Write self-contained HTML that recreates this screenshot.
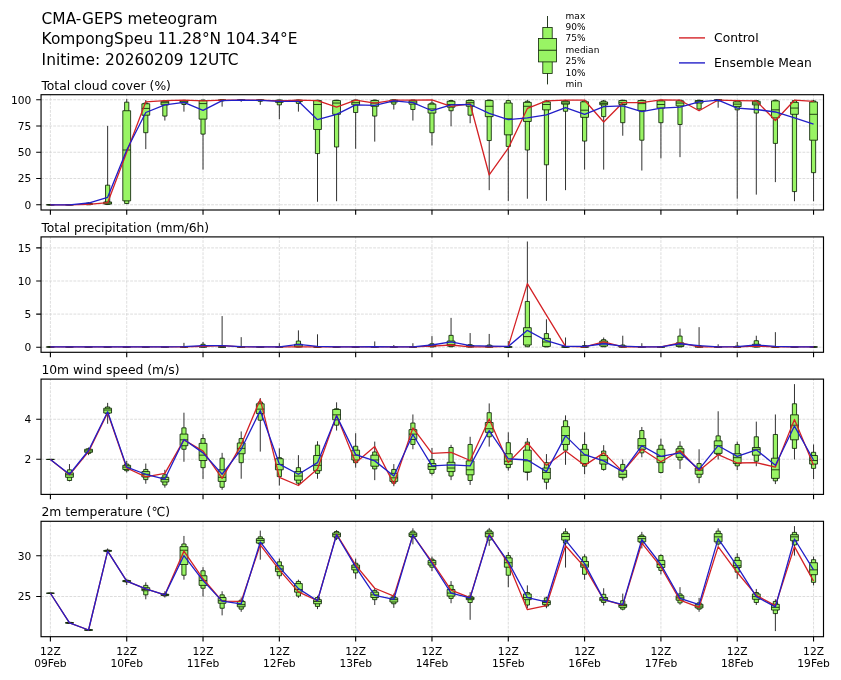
<!DOCTYPE html>
<html><head><meta charset="utf-8"><title>CMA-GEPS meteogram</title>
<style>html,body{margin:0;padding:0;background:#fff}svg{display:block;will-change:transform}</style></head>
<body>
<svg width="841" height="680" viewBox="0 0 841 680" font-family='"DejaVu Sans","Liberation Sans",sans-serif' fill="#000">
<rect width="841" height="680" fill="#fff"/>
<text x="41.6" y="23.70" font-size="15.42">CMA-GEPS meteogram</text>
<text x="41.6" y="44.45" font-size="15.42">KompongSpeu 11.28°N 104.34°E</text>
<text x="41.6" y="65.20" font-size="15.42">Initime: 20260209 12UTC</text>
<line x1="547.5" y1="16" x2="547.5" y2="84.4" stroke="#0e2408" stroke-width="0.9"/>
<rect x="542.8" y="27.5" width="9.4" height="46" fill="#99f464" stroke="#0e2408" stroke-width="0.8"/>
<rect x="538.5" y="38.4" width="18" height="23.5" fill="#99f464" stroke="#0e2408" stroke-width="0.8"/>
<line x1="538.5" y1="50.25" x2="556.5" y2="50.25" stroke="#0e2408" stroke-width="0.9"/>
<text x="565.6" y="18.55" font-size="9.0">max</text>
<text x="565.6" y="29.97" font-size="9.0">90%</text>
<text x="565.6" y="41.39" font-size="9.0">75%</text>
<text x="565.6" y="52.81" font-size="9.0">median</text>
<text x="565.6" y="64.23" font-size="9.0">25%</text>
<text x="565.6" y="75.65" font-size="9.0">10%</text>
<text x="565.6" y="87.07" font-size="9.0">min</text>
<line x1="679" y1="37.9" x2="705" y2="37.9" stroke="#d42226" stroke-width="1.39"/>
<line x1="679" y1="62.9" x2="705" y2="62.9" stroke="#221ec8" stroke-width="1.39"/>
<text x="714.1" y="42.4" font-size="12.3">Control</text>
<text x="714.0" y="67.4" font-size="12.3">Ensemble Mean</text>
<g>
<text x="41.4" y="89.8" font-size="12.33">Total cloud cover (%)</text>
<path d="M50.40 210.0V94.7M126.72 210.0V94.7M203.03 210.0V94.7M279.34 210.0V94.7M355.66 210.0V94.7M431.97 210.0V94.7M508.29 210.0V94.7M584.60 210.0V94.7M660.92 210.0V94.7M737.24 210.0V94.7M813.55 210.0V94.7M41.05 204.75H823.5M41.05 178.5H823.5M41.05 152.25H823.5M41.05 126.0H823.5M41.05 99.75H823.5" stroke="#d2d2d2" stroke-width="0.76" stroke-dasharray="2.83 1.22" fill="none"/>
<clipPath id="c0"><rect x="41.05" y="94.7" width="782.45" height="115.3"/></clipPath>
<g clip-path="url(#c0)">
<path d="M50.40 204.79V204.79M69.48 204.79V204.79M88.56 202.29V204.79M107.64 125.91V204.79M126.72 99.14V204.08M145.79 100.03V149.11M164.87 100.21V120.55M183.95 100.03V111.63M203.03 99.85V169.63M222.11 99.85V106.63M241.19 99.85V101.82M260.27 99.85V104.85M279.34 99.85V119.13M298.42 99.85V111.63M317.50 99.85V201.76M336.58 99.85V201.22M355.66 99.85V148.75M374.74 99.85V141.61M393.82 99.85V109.49M412.90 99.85V120.55M431.97 99.85V145.54M451.05 99.85V126.27M470.13 99.85V123.23M489.21 99.85V190.16M508.29 99.85V200.86M527.37 99.85V198.72M546.45 99.85V200.86M565.53 99.85V190.16M584.60 99.85V169.63M603.68 99.85V169.63M622.76 99.85V135.72M641.84 99.85V170.53M660.92 99.85V158.39M680.00 99.85V157.14M699.08 99.85V109.85M718.16 99.85V107.71M737.24 99.85V198.72M756.31 99.85V194.62M775.39 99.85V182.13M794.47 99.85V201.22M813.55 99.85V201.22" stroke="#262626" stroke-width="0.95" fill="none"/>
<path d="M48.30 204.79h4.2V204.79h-4.2ZM67.38 204.79h4.2V204.79h-4.2ZM86.46 203.01h4.2V204.79h-4.2ZM105.54 185.16h4.2V204.43h-4.2ZM124.62 102.17h4.2V203.54h-4.2ZM143.69 103.06h4.2V132.69h-4.2ZM162.77 100.92h4.2V116.09h-4.2ZM181.85 100.39h4.2V104.49h-4.2ZM200.93 100.03h4.2V134.12h-4.2ZM220.01 99.85h4.2V100.92h-4.2ZM239.09 99.85h4.2V100.39h-4.2ZM258.17 99.85h4.2V101.28h-4.2ZM277.24 100.03h4.2V104.85h-4.2ZM296.32 100.03h4.2V103.42h-4.2ZM315.40 100.21h4.2V153.57h-4.2ZM334.48 100.21h4.2V146.97h-4.2ZM353.56 100.03h4.2V112.52h-4.2ZM372.64 100.03h4.2V116.09h-4.2ZM391.72 99.85h4.2V104.14h-4.2ZM410.80 100.03h4.2V109.49h-4.2ZM429.87 103.06h4.2V132.69h-4.2ZM448.95 100.57h4.2V110.74h-4.2ZM468.03 100.03h4.2V115.20h-4.2ZM487.11 100.03h4.2V140.54h-4.2ZM506.19 100.57h4.2V146.43h-4.2ZM525.27 101.28h4.2V150.00h-4.2ZM544.35 100.92h4.2V164.81h-4.2ZM563.43 100.57h4.2V111.27h-4.2ZM582.50 100.92h4.2V141.08h-4.2ZM601.58 100.92h4.2V116.63h-4.2ZM620.66 100.21h4.2V122.70h-4.2ZM639.74 100.21h4.2V140.19h-4.2ZM658.82 100.21h4.2V122.70h-4.2ZM677.90 100.21h4.2V124.48h-4.2ZM696.98 100.21h4.2V108.95h-4.2ZM716.06 99.85h4.2V100.92h-4.2ZM735.13 100.57h4.2V109.85h-4.2ZM754.21 100.57h4.2V113.06h-4.2ZM773.29 100.21h4.2V143.40h-4.2ZM792.37 100.57h4.2V191.58h-4.2ZM811.45 100.92h4.2V172.67h-4.2Z" stroke="#0e2408" stroke-width="0.85" fill="#99f464"/>
<path d="M46.50 204.79h7.8V204.79h-7.8ZM65.58 204.79h7.8V204.79h-7.8ZM84.66 203.54h7.8V204.43h-7.8ZM103.74 201.94h7.8V204.08h-7.8ZM122.81 110.74h7.8V200.86h-7.8ZM141.89 103.78h7.8V115.20h-7.8ZM160.97 101.28h7.8V104.85h-7.8ZM180.05 100.57h7.8V102.71h-7.8ZM199.13 100.57h7.8V119.13h-7.8ZM218.21 100.03h7.8V100.39h-7.8ZM237.29 100.03h7.8V100.21h-7.8ZM256.37 100.03h7.8V100.57h-7.8ZM275.44 100.21h7.8V102.35h-7.8ZM294.52 100.21h7.8V101.64h-7.8ZM313.60 100.57h7.8V129.48h-7.8ZM332.68 100.57h7.8V114.31h-7.8ZM351.76 100.39h7.8V104.85h-7.8ZM370.84 100.57h7.8V106.28h-7.8ZM389.92 100.03h7.8V101.99h-7.8ZM409.00 100.39h7.8V104.14h-7.8ZM428.07 104.14h7.8V113.06h-7.8ZM447.15 101.28h7.8V107.17h-7.8ZM466.23 100.57h7.8V106.28h-7.8ZM485.31 100.57h7.8V116.63h-7.8ZM504.39 103.06h7.8V134.83h-7.8ZM523.47 102.35h7.8V121.45h-7.8ZM542.55 101.82h7.8V109.85h-7.8ZM561.63 101.28h7.8V104.14h-7.8ZM580.70 101.82h7.8V117.34h-7.8ZM599.78 101.99h7.8V104.85h-7.8ZM618.86 100.57h7.8V104.49h-7.8ZM637.94 100.57h7.8V110.74h-7.8ZM657.02 100.92h7.8V108.06h-7.8ZM676.10 100.92h7.8V105.92h-7.8ZM695.18 100.57h7.8V103.06h-7.8ZM714.26 100.03h7.8V100.21h-7.8ZM733.34 101.82h7.8V106.63h-7.8ZM752.41 101.28h7.8V104.85h-7.8ZM771.49 100.92h7.8V117.88h-7.8ZM790.57 102.35h7.8V114.31h-7.8ZM809.65 101.99h7.8V140.19h-7.8Z" stroke="#0e2408" stroke-width="0.85" fill="#99f464"/>
<path d="M46.50 204.79h7.8M65.58 204.79h7.8M84.66 204.08h7.8M103.74 203.01h7.8M122.81 150.00h7.8M141.89 108.42h7.8M160.97 102.71h7.8M180.05 101.28h7.8M199.13 103.60h7.8M218.21 100.21h7.8M237.29 100.03h7.8M256.37 100.03h7.8M275.44 100.92h7.8M294.52 100.57h7.8M313.60 104.49h7.8M332.68 103.06h7.8M351.76 102.71h7.8M370.84 103.06h7.8M389.92 100.92h7.8M409.00 101.99h7.8M428.07 108.95h7.8M447.15 104.49h7.8M466.23 102.71h7.8M485.31 106.28h7.8M504.39 118.77h7.8M523.47 106.28h7.8M542.55 104.49h7.8M561.63 103.06h7.8M580.70 110.20h7.8M599.78 103.60h7.8M618.86 102.71h7.8M637.94 103.60h7.8M657.02 104.49h7.8M676.10 103.06h7.8M695.18 101.28h7.8M714.26 100.03h7.8M733.34 104.14h7.8M752.41 103.06h7.8M771.49 109.85h7.8M790.57 108.06h7.8M809.65 114.31h7.8" stroke="#0e2408" stroke-width="0.85" fill="none"/>
<polyline points="50.40,204.79 69.48,204.79 88.56,204.43 107.64,202.65 126.72,152.32 145.79,101.82 164.87,100.57 183.95,100.21 203.03,100.92 222.11,100.03 241.19,100.03 260.27,100.03 279.34,100.92 298.42,100.21 317.50,100.57 336.58,107.17 355.66,100.21 374.74,103.06 393.82,100.03 412.90,100.03 431.97,99.85 451.05,106.28 470.13,103.78 489.21,174.99 508.29,148.22 527.37,108.42 546.45,100.92 565.53,100.21 584.60,100.21 603.68,121.98 622.76,102.71 641.84,102.71 660.92,99.85 680.00,100.21 699.08,110.74 718.16,100.03 737.24,100.57 756.31,100.92 775.39,120.55 794.47,100.21 813.55,101.28" stroke="#d42226" stroke-width="1.3" fill="none" stroke-linejoin="round"/>
<polyline points="50.40,204.79 69.48,204.79 88.56,203.01 107.64,197.29 126.72,150.00 145.79,112.52 164.87,104.85 183.95,102.35 203.03,110.38 222.11,100.57 241.19,100.21 260.27,100.39 279.34,101.28 298.42,101.28 317.50,119.66 336.58,114.31 355.66,104.85 374.74,105.38 393.82,100.92 412.90,102.71 431.97,110.74 451.05,104.85 470.13,104.49 489.21,113.42 508.29,119.66 527.37,117.88 546.45,114.84 565.53,107.71 584.60,114.31 603.68,106.63 622.76,105.92 641.84,111.63 660.92,108.06 680.00,107.17 699.08,101.82 718.16,100.21 737.24,108.06 756.31,109.49 775.39,111.99 794.47,117.88 813.55,124.12" stroke="#221ec8" stroke-width="1.3" fill="none" stroke-linejoin="round"/>
</g>
<rect x="41.05" y="94.7" width="782.45" height="115.3" fill="none" stroke="#000" stroke-width="1.15"/>
<path d="M50.40 210.0v4.86M126.72 210.0v4.86M203.03 210.0v4.86M279.34 210.0v4.86M355.66 210.0v4.86M431.97 210.0v4.86M508.29 210.0v4.86M584.60 210.0v4.86M660.92 210.0v4.86M737.24 210.0v4.86M813.55 210.0v4.86M41.05 204.75h-4.86M41.05 178.5h-4.86M41.05 152.25h-4.86M41.05 126.0h-4.86M41.05 99.75h-4.86" stroke="#000" stroke-width="1.11" fill="none"/>
<text x="31.35" y="208.70" font-size="10.65" text-anchor="end">0</text>
<text x="31.35" y="182.45" font-size="10.65" text-anchor="end">25</text>
<text x="31.35" y="156.20" font-size="10.65" text-anchor="end">50</text>
<text x="31.35" y="129.95" font-size="10.65" text-anchor="end">75</text>
<text x="31.35" y="103.70" font-size="10.65" text-anchor="end">100</text>
</g>
<g>
<text x="41.4" y="232.0" font-size="12.33">Total precipitation (mm/6h)</text>
<path d="M50.40 352.3V236.9M126.72 352.3V236.9M203.03 352.3V236.9M279.34 352.3V236.9M355.66 352.3V236.9M431.97 352.3V236.9M508.29 352.3V236.9M584.60 352.3V236.9M660.92 352.3V236.9M737.24 352.3V236.9M813.55 352.3V236.9M41.05 347.2H823.5M41.05 314.1H823.5M41.05 281.0H823.5M41.05 247.9H823.5" stroke="#d2d2d2" stroke-width="0.76" stroke-dasharray="2.83 1.22" fill="none"/>
<clipPath id="c1"><rect x="41.05" y="236.9" width="782.45" height="115.4"/></clipPath>
<g clip-path="url(#c1)">
<path d="M50.40 346.97V346.97M69.48 346.97V346.97M88.56 346.97V346.97M107.64 346.97V346.97M126.72 346.97V346.97M145.79 346.97V346.97M164.87 346.97V346.97M183.95 342.86V346.97M203.03 341.97V346.97M222.11 316.09V346.97M241.19 337.15V346.97M260.27 346.97V346.97M279.34 343.22V346.97M298.42 330.37V346.97M317.50 334.30V346.97M336.58 346.97V346.97M355.66 346.97V346.97M374.74 341.44V346.97M393.82 345.01V346.97M412.90 343.22V346.97M431.97 336.08V346.97M451.05 317.88V346.97M470.13 333.05V346.97M489.21 333.94V346.97M508.29 341.08V346.97M527.37 241.50V346.97M546.45 319.31V346.97M565.53 337.51V346.97M584.60 341.08V346.97M603.68 337.51V346.97M622.76 335.73V346.97M641.84 343.22V346.97M660.92 346.97V346.97M680.00 328.59V346.97M699.08 327.16V346.97M718.16 344.29V346.97M737.24 341.97V346.97M756.31 335.73V346.97M775.39 332.16V346.97M794.47 346.97V346.97M813.55 346.97V346.97" stroke="#262626" stroke-width="0.95" fill="none"/>
<path d="M48.30 346.97h4.2V346.97h-4.2ZM67.38 346.97h4.2V346.97h-4.2ZM86.46 346.97h4.2V346.97h-4.2ZM105.54 346.97h4.2V346.97h-4.2ZM124.62 346.97h4.2V346.97h-4.2ZM143.69 346.97h4.2V346.97h-4.2ZM162.77 346.97h4.2V346.97h-4.2ZM181.85 346.97h4.2V346.97h-4.2ZM200.93 344.29h4.2V346.97h-4.2ZM220.01 346.43h4.2V346.97h-4.2ZM239.09 346.97h4.2V346.97h-4.2ZM258.17 346.97h4.2V346.97h-4.2ZM277.24 346.97h4.2V346.97h-4.2ZM296.32 341.08h4.2V346.97h-4.2ZM315.40 346.97h4.2V346.97h-4.2ZM334.48 346.97h4.2V346.97h-4.2ZM353.56 346.97h4.2V346.97h-4.2ZM372.64 346.97h4.2V346.97h-4.2ZM391.72 346.97h4.2V346.97h-4.2ZM410.80 346.97h4.2V346.97h-4.2ZM429.87 343.76h4.2V346.97h-4.2ZM448.95 335.37h4.2V346.79h-4.2ZM468.03 344.65h4.2V346.97h-4.2ZM487.11 345.01h4.2V346.97h-4.2ZM506.19 346.97h4.2V346.97h-4.2ZM525.27 301.46h4.2V346.79h-4.2ZM544.35 333.58h4.2V346.97h-4.2ZM563.43 346.97h4.2V346.97h-4.2ZM582.50 345.54h4.2V346.97h-4.2ZM601.58 339.65h4.2V346.79h-4.2ZM620.66 345.01h4.2V346.97h-4.2ZM639.74 346.97h4.2V346.97h-4.2ZM658.82 346.97h4.2V346.97h-4.2ZM677.90 336.08h4.2V346.97h-4.2ZM696.98 345.54h4.2V346.97h-4.2ZM716.06 346.97h4.2V346.97h-4.2ZM735.13 346.08h4.2V346.97h-4.2ZM754.21 340.72h4.2V346.97h-4.2ZM773.29 346.97h4.2V346.97h-4.2ZM792.37 346.97h4.2V346.97h-4.2ZM811.45 346.97h4.2V346.97h-4.2Z" stroke="#0e2408" stroke-width="0.85" fill="#99f464"/>
<path d="M46.50 346.97h7.8V346.97h-7.8ZM65.58 346.97h7.8V346.97h-7.8ZM84.66 346.97h7.8V346.97h-7.8ZM103.74 346.97h7.8V346.97h-7.8ZM122.81 346.97h7.8V346.97h-7.8ZM141.89 346.97h7.8V346.97h-7.8ZM160.97 346.97h7.8V346.97h-7.8ZM180.05 346.97h7.8V346.97h-7.8ZM199.13 346.08h7.8V346.97h-7.8ZM218.21 346.97h7.8V346.97h-7.8ZM237.29 346.97h7.8V346.97h-7.8ZM256.37 346.97h7.8V346.97h-7.8ZM275.44 346.97h7.8V346.97h-7.8ZM294.52 344.29h7.8V346.97h-7.8ZM313.60 346.97h7.8V346.97h-7.8ZM332.68 346.97h7.8V346.97h-7.8ZM351.76 346.97h7.8V346.97h-7.8ZM370.84 346.97h7.8V346.97h-7.8ZM389.92 346.97h7.8V346.97h-7.8ZM409.00 346.97h7.8V346.97h-7.8ZM428.07 345.01h7.8V346.61h-7.8ZM447.15 341.08h7.8V346.08h-7.8ZM466.23 345.54h7.8V346.97h-7.8ZM485.31 346.08h7.8V346.97h-7.8ZM504.39 346.97h7.8V346.97h-7.8ZM523.47 327.69h7.8V345.01h-7.8ZM542.55 338.40h7.8V346.43h-7.8ZM561.63 346.97h7.8V346.97h-7.8ZM580.70 346.97h7.8V346.97h-7.8ZM599.78 341.08h7.8V346.08h-7.8ZM618.86 346.08h7.8V346.97h-7.8ZM637.94 346.97h7.8V346.97h-7.8ZM657.02 346.97h7.8V346.97h-7.8ZM676.10 342.86h7.8V346.43h-7.8ZM695.18 346.43h7.8V346.97h-7.8ZM714.26 346.97h7.8V346.97h-7.8ZM733.34 346.97h7.8V346.97h-7.8ZM752.41 344.29h7.8V346.97h-7.8ZM771.49 346.97h7.8V346.97h-7.8ZM790.57 346.97h7.8V346.97h-7.8ZM809.65 346.97h7.8V346.97h-7.8Z" stroke="#0e2408" stroke-width="0.85" fill="#99f464"/>
<path d="M46.50 346.97h7.8M65.58 346.97h7.8M84.66 346.97h7.8M103.74 346.97h7.8M122.81 346.97h7.8M141.89 346.97h7.8M160.97 346.97h7.8M180.05 346.97h7.8M199.13 346.97h7.8M218.21 346.97h7.8M237.29 346.97h7.8M256.37 346.97h7.8M275.44 346.97h7.8M294.52 346.08h7.8M313.60 346.97h7.8M332.68 346.97h7.8M351.76 346.97h7.8M370.84 346.97h7.8M389.92 346.97h7.8M409.00 346.97h7.8M428.07 346.08h7.8M447.15 344.65h7.8M466.23 346.43h7.8M485.31 346.97h7.8M504.39 346.97h7.8M523.47 336.62h7.8M542.55 341.97h7.8M561.63 346.97h7.8M580.70 346.97h7.8M599.78 343.22h7.8M618.86 346.97h7.8M637.94 346.97h7.8M657.02 346.97h7.8M676.10 345.01h7.8M695.18 346.97h7.8M714.26 346.97h7.8M733.34 346.97h7.8M752.41 346.08h7.8M771.49 346.97h7.8M790.57 346.97h7.8M809.65 346.97h7.8" stroke="#0e2408" stroke-width="0.85" fill="none"/>
<polyline points="50.40,346.97 69.48,346.97 88.56,346.97 107.64,346.97 126.72,346.97 145.79,346.97 164.87,346.97 183.95,346.97 203.03,346.43 222.11,345.54 241.19,346.97 260.27,346.97 279.34,346.97 298.42,346.79 317.50,346.97 336.58,346.97 355.66,346.97 374.74,346.97 393.82,346.97 412.90,346.97 431.97,346.08 451.05,345.01 470.13,346.97 489.21,346.97 508.29,346.43 527.37,283.61 546.45,315.20 565.53,346.43 584.60,346.97 603.68,341.97 622.76,346.79 641.84,346.97 660.92,346.97 680.00,342.86 699.08,346.79 718.16,346.97 737.24,346.79 756.31,346.08 775.39,346.97 794.47,346.97 813.55,346.97" stroke="#d42226" stroke-width="1.3" fill="none" stroke-linejoin="round"/>
<polyline points="50.40,346.97 69.48,346.97 88.56,346.97 107.64,346.97 126.72,346.97 145.79,346.97 164.87,346.97 183.95,346.61 203.03,345.54 222.11,345.54 241.19,346.61 260.27,346.97 279.34,346.79 298.42,344.29 317.50,346.43 336.58,346.97 355.66,346.97 374.74,346.61 393.82,346.97 412.90,346.79 431.97,345.01 451.05,341.97 470.13,345.54 489.21,346.08 508.29,346.43 527.37,330.37 546.45,340.72 565.53,346.43 584.60,346.43 603.68,343.76 622.76,346.08 641.84,346.97 660.92,346.97 680.00,343.76 699.08,345.72 718.16,346.97 737.24,346.61 756.31,345.01 775.39,346.43 794.47,346.97 813.55,346.97" stroke="#221ec8" stroke-width="1.3" fill="none" stroke-linejoin="round"/>
</g>
<rect x="41.05" y="236.9" width="782.45" height="115.4" fill="none" stroke="#000" stroke-width="1.15"/>
<path d="M50.40 352.3v4.86M126.72 352.3v4.86M203.03 352.3v4.86M279.34 352.3v4.86M355.66 352.3v4.86M431.97 352.3v4.86M508.29 352.3v4.86M584.60 352.3v4.86M660.92 352.3v4.86M737.24 352.3v4.86M813.55 352.3v4.86M41.05 347.2h-4.86M41.05 314.1h-4.86M41.05 281.0h-4.86M41.05 247.9h-4.86" stroke="#000" stroke-width="1.11" fill="none"/>
<text x="31.35" y="351.15" font-size="10.65" text-anchor="end">0</text>
<text x="31.35" y="318.05" font-size="10.65" text-anchor="end">5</text>
<text x="31.35" y="284.95" font-size="10.65" text-anchor="end">10</text>
<text x="31.35" y="251.85" font-size="10.65" text-anchor="end">15</text>
</g>
<g>
<text x="41.4" y="374.2" font-size="12.33">10m wind speed (m/s)</text>
<path d="M50.40 494.4V379.1M126.72 494.4V379.1M203.03 494.4V379.1M279.34 494.4V379.1M355.66 494.4V379.1M431.97 494.4V379.1M508.29 494.4V379.1M584.60 494.4V379.1M660.92 494.4V379.1M737.24 494.4V379.1M813.55 494.4V379.1M41.05 459.25H823.5M41.05 419.25H823.5" stroke="#d2d2d2" stroke-width="0.76" stroke-dasharray="2.83 1.22" fill="none"/>
<clipPath id="c2"><rect x="41.05" y="379.1" width="782.45" height="115.29999999999995"/></clipPath>
<g clip-path="url(#c2)">
<path d="M50.40 459.45V459.45M69.48 464.09V481.40M88.56 447.49V455.17M107.64 402.88V423.76M126.72 460.88V472.48M145.79 463.56V483.72M164.87 469.80V487.65M183.95 412.69V461.77M203.03 434.11V479.08M222.11 452.85V489.79M241.19 431.43V478.73M260.27 398.06V451.60M279.34 448.39V485.51M298.42 455.17V484.97M317.50 441.25V478.73M336.58 402.34V430.54M355.66 433.22V467.66M374.74 441.60V480.15M393.82 464.09V486.22M412.90 414.48V449.28M431.97 448.03V475.51M451.05 444.82V480.15M470.13 436.79V484.97M489.21 403.41V446.60M508.29 432.32V470.69M527.37 438.04V480.51M546.45 454.10V489.43M565.53 415.37V464.81M584.60 432.32V474.26M603.68 445.17V470.69M622.76 459.45V480.51M641.84 426.97V457.31M660.92 438.57V473.37M680.00 441.25V468.91M699.08 449.28V483.19M718.16 411.27V459.45M737.24 441.60V470.16M756.31 421.62V466.23M775.39 414.48V484.08M794.47 384.14V459.45M813.55 444.46V479.08" stroke="#262626" stroke-width="0.95" fill="none"/>
<path d="M48.30 459.45h4.2V459.45h-4.2ZM67.38 469.80h4.2V480.51h-4.2ZM86.46 448.74h4.2V453.38h-4.2ZM105.54 406.98h4.2V413.59h-4.2ZM124.62 464.09h4.2V470.69h-4.2ZM143.69 469.45h4.2V479.62h-4.2ZM162.77 474.80h4.2V484.97h-4.2ZM181.85 427.86h4.2V449.28h-4.2ZM200.93 438.57h4.2V467.66h-4.2ZM220.01 458.20h4.2V487.29h-4.2ZM239.09 438.57h4.2V462.66h-4.2ZM258.17 401.99h4.2V420.19h-4.2ZM277.24 457.67h4.2V476.58h-4.2ZM296.32 467.66h4.2V483.19h-4.2ZM315.40 445.17h4.2V473.37h-4.2ZM334.48 408.77h4.2V425.19h-4.2ZM353.56 446.24h4.2V462.66h-4.2ZM372.64 451.96h4.2V468.91h-4.2ZM391.72 469.45h4.2V483.19h-4.2ZM410.80 423.04h4.2V444.46h-4.2ZM429.87 459.45h4.2V473.37h-4.2ZM448.95 447.49h4.2V476.05h-4.2ZM468.03 444.46h4.2V480.51h-4.2ZM487.11 412.69h4.2V436.79h-4.2ZM506.19 442.68h4.2V467.66h-4.2ZM525.27 442.14h4.2V472.48h-4.2ZM544.35 462.66h4.2V482.29h-4.2ZM563.43 420.72h4.2V450.17h-4.2ZM582.50 444.46h4.2V466.23h-4.2ZM601.58 451.06h4.2V469.45h-4.2ZM620.66 464.45h4.2V477.83h-4.2ZM639.74 430.54h4.2V452.85h-4.2ZM658.82 445.17h4.2V472.48h-4.2ZM677.90 446.24h4.2V459.99h-4.2ZM696.98 463.56h4.2V477.30h-4.2ZM716.06 435.89h4.2V454.63h-4.2ZM735.13 444.46h4.2V465.88h-4.2ZM754.21 436.79h4.2V461.24h-4.2ZM773.29 434.47h4.2V480.87h-4.2ZM792.37 403.77h4.2V448.39h-4.2ZM811.45 452.31h4.2V468.37h-4.2Z" stroke="#0e2408" stroke-width="0.85" fill="#99f464"/>
<path d="M46.50 459.45h7.8V459.45h-7.8ZM65.58 472.84h7.8V477.30h-7.8ZM84.66 449.28h7.8V452.31h-7.8ZM103.74 408.23h7.8V413.05h-7.8ZM122.81 465.34h7.8V469.45h-7.8ZM141.89 471.59h7.8V476.94h-7.8ZM160.97 477.30h7.8V481.94h-7.8ZM180.05 434.11h7.8V445.71h-7.8ZM199.13 443.39h7.8V460.52h-7.8ZM218.21 469.80h7.8V481.40h-7.8ZM237.29 443.03h7.8V453.74h-7.8ZM256.37 403.77h7.8V413.59h-7.8ZM275.44 458.74h7.8V469.80h-7.8ZM294.52 471.59h7.8V480.15h-7.8ZM313.60 455.53h7.8V470.69h-7.8ZM332.68 409.48h7.8V419.83h-7.8ZM351.76 450.17h7.8V459.99h-7.8ZM370.84 455.17h7.8V466.23h-7.8ZM389.92 473.37h7.8V481.40h-7.8ZM409.00 429.65h7.8V439.46h-7.8ZM428.07 463.56h7.8V469.45h-7.8ZM447.15 462.31h7.8V471.59h-7.8ZM466.23 460.88h7.8V474.80h-7.8ZM485.31 422.51h7.8V432.32h-7.8ZM504.39 453.74h7.8V464.45h-7.8ZM523.47 450.17h7.8V471.94h-7.8ZM542.55 468.02h7.8V479.08h-7.8ZM561.63 426.61h7.8V444.46h-7.8ZM580.70 449.28h7.8V463.56h-7.8ZM599.78 455.53h7.8V464.09h-7.8ZM618.86 470.16h7.8V477.30h-7.8ZM637.94 438.57h7.8V449.28h-7.8ZM657.02 449.28h7.8V462.66h-7.8ZM676.10 448.74h7.8V457.31h-7.8ZM695.18 468.02h7.8V474.26h-7.8ZM714.26 440.89h7.8V453.38h-7.8ZM733.34 453.74h7.8V463.56h-7.8ZM752.41 447.49h7.8V455.17h-7.8ZM771.49 458.20h7.8V478.37h-7.8ZM790.57 414.83h7.8V439.82h-7.8ZM809.65 455.53h7.8V464.09h-7.8Z" stroke="#0e2408" stroke-width="0.85" fill="#99f464"/>
<path d="M46.50 459.45h7.8M65.58 474.80h7.8M84.66 450.88h7.8M103.74 410.02h7.8M122.81 467.13h7.8M141.89 474.26h7.8M160.97 479.62h7.8M180.05 439.82h7.8M199.13 455.17h7.8M218.21 477.30h7.8M237.29 448.39h7.8M256.37 409.12h7.8M275.44 464.45h7.8M294.52 476.05h7.8M313.60 465.34h7.8M332.68 414.83h7.8M351.76 455.17h7.8M370.84 459.99h7.8M389.92 477.83h7.8M409.00 434.11h7.8M428.07 466.59h7.8M447.15 468.02h7.8M466.23 469.80h7.8M485.31 428.76h7.8M504.39 461.24h7.8M523.47 460.88h7.8M542.55 472.48h7.8M561.63 435.54h7.8M580.70 455.17h7.8M599.78 459.99h7.8M618.86 474.26h7.8M637.94 445.71h7.8M657.02 456.42h7.8M676.10 451.96h7.8M695.18 470.16h7.8M714.26 445.71h7.8M733.34 457.67h7.8M752.41 449.28h7.8M771.49 469.80h7.8M790.57 425.19h7.8M809.65 460.52h7.8" stroke="#0e2408" stroke-width="0.85" fill="none"/>
<polyline points="50.40,459.45 69.48,474.80 88.56,451.60 107.64,412.69 126.72,468.02 145.79,476.94 164.87,473.37 183.95,439.82 203.03,451.06 222.11,478.37 241.19,444.82 260.27,399.31 279.34,477.30 298.42,485.51 317.50,468.91 336.58,415.37 355.66,462.66 374.74,446.60 393.82,484.08 412.90,427.86 431.97,453.38 451.05,452.31 470.13,460.52 489.21,418.94 508.29,462.66 527.37,443.03 546.45,465.34 565.53,451.06 584.60,465.34 603.68,452.85 622.76,471.59 641.84,449.28 660.92,461.77 680.00,450.53 699.08,470.69 718.16,454.63 737.24,463.02 756.31,462.66 775.39,467.13 794.47,419.47 813.55,465.34" stroke="#d42226" stroke-width="1.3" fill="none" stroke-linejoin="round"/>
<polyline points="50.40,459.45 69.48,474.26 88.56,450.53 107.64,411.80 126.72,467.13 145.79,474.26 164.87,479.08 183.95,439.46 203.03,452.85 222.11,474.26 241.19,449.28 260.27,410.55 279.34,464.09 298.42,474.26 317.50,462.66 336.58,415.91 355.66,454.63 374.74,460.88 393.82,476.05 412.90,434.47 431.97,465.88 451.05,464.81 470.13,465.88 489.21,430.54 508.29,458.74 527.37,459.99 546.45,471.59 565.53,435.89 584.60,454.63 603.68,460.88 622.76,471.59 641.84,445.71 660.92,456.42 680.00,452.85 699.08,469.45 718.16,445.71 737.24,456.42 756.31,449.81 775.39,465.34 794.47,426.08 813.55,459.99" stroke="#221ec8" stroke-width="1.3" fill="none" stroke-linejoin="round"/>
</g>
<rect x="41.05" y="379.1" width="782.45" height="115.29999999999995" fill="none" stroke="#000" stroke-width="1.15"/>
<path d="M50.40 494.4v4.86M126.72 494.4v4.86M203.03 494.4v4.86M279.34 494.4v4.86M355.66 494.4v4.86M431.97 494.4v4.86M508.29 494.4v4.86M584.60 494.4v4.86M660.92 494.4v4.86M737.24 494.4v4.86M813.55 494.4v4.86M41.05 459.25h-4.86M41.05 419.25h-4.86" stroke="#000" stroke-width="1.11" fill="none"/>
<text x="31.35" y="463.20" font-size="10.65" text-anchor="end">2</text>
<text x="31.35" y="423.20" font-size="10.65" text-anchor="end">4</text>
</g>
<g>
<text x="41.4" y="516.4" font-size="12.33">2m temperature (℃)</text>
<path d="M50.40 636.7V521.3M126.72 636.7V521.3M203.03 636.7V521.3M279.34 636.7V521.3M355.66 636.7V521.3M431.97 636.7V521.3M508.29 636.7V521.3M584.60 636.7V521.3M660.92 636.7V521.3M737.24 636.7V521.3M813.55 636.7V521.3M41.05 596.5H823.5M41.05 555.75H823.5" stroke="#d2d2d2" stroke-width="0.76" stroke-dasharray="2.83 1.22" fill="none"/>
<clipPath id="c3"><rect x="41.05" y="521.3" width="782.45" height="115.40000000000009"/></clipPath>
<g clip-path="url(#c3)">
<path d="M50.40 593.24V593.24M69.48 621.97V623.76M88.56 629.11V630.90M107.64 548.45V552.19M126.72 578.79V585.03M145.79 582.36V599.31M164.87 591.28V597.53M183.95 535.95V579.68M203.03 567.19V596.63M222.11 591.28V615.37M241.19 597.53V611.80M260.27 530.60V559.69M279.34 558.62V578.79M298.42 579.68V597.88M317.50 595.74V609.13M336.58 530.06V540.06M355.66 558.62V578.79M374.74 588.24V605.02M393.82 593.60V607.88M412.90 528.28V544.34M431.97 556.48V571.11M451.05 581.11V603.24M470.13 592.17V619.83M489.21 527.92V545.77M508.29 552.02V587.17M527.37 585.39V608.23M546.45 596.63V608.23M565.53 528.28V567.54M584.60 554.34V579.68M603.68 588.24V605.56M622.76 593.60V610.37M641.84 531.85V548.45M660.92 554.34V574.32M680.00 587.17V604.66M699.08 597.88V611.80M718.16 528.28V545.77M737.24 553.27V578.79M756.31 588.96V605.02M775.39 599.31V631.08M794.47 526.14V555.59M813.55 556.48V585.39" stroke="#262626" stroke-width="0.95" fill="none"/>
<path d="M48.30 593.24h4.2V593.24h-4.2ZM67.38 622.33h4.2V623.40h-4.2ZM86.46 629.47h4.2V630.54h-4.2ZM105.54 550.05h4.2V551.66h-4.2ZM124.62 580.21h4.2V582.00h-4.2ZM143.69 585.39h4.2V594.85h-4.2ZM162.77 593.78h4.2V595.92h-4.2ZM181.85 543.99h4.2V575.22h-4.2ZM200.93 570.76h4.2V588.24h-4.2ZM220.01 594.85h4.2V608.23h-4.2ZM239.09 600.20h4.2V609.13h-4.2ZM258.17 536.85h4.2V543.99h-4.2ZM277.24 561.83h4.2V575.75h-4.2ZM296.32 581.46h4.2V596.10h-4.2ZM315.40 597.53h4.2V606.45h-4.2ZM334.48 531.49h4.2V538.27h-4.2ZM353.56 563.26h4.2V572.90h-4.2ZM372.64 590.39h4.2V599.67h-4.2ZM391.72 596.63h4.2V603.77h-4.2ZM410.80 531.14h4.2V537.74h-4.2ZM429.87 559.15h4.2V567.19h-4.2ZM448.95 585.39h4.2V598.42h-4.2ZM468.03 596.10h4.2V602.52h-4.2ZM487.11 530.06h4.2V540.06h-4.2ZM506.19 555.59h4.2V575.22h-4.2ZM525.27 592.53h4.2V605.02h-4.2ZM544.35 597.88h4.2V606.09h-4.2ZM563.43 531.85h4.2V543.09h-4.2ZM582.50 556.83h4.2V574.32h-4.2ZM601.58 594.31h4.2V602.52h-4.2ZM620.66 600.74h4.2V609.13h-4.2ZM639.74 535.06h4.2V543.09h-4.2ZM658.82 555.59h4.2V570.40h-4.2ZM677.90 593.96h4.2V602.88h-4.2ZM696.98 602.88h4.2V609.13h-4.2ZM716.06 531.14h4.2V543.99h-4.2ZM735.13 557.37h4.2V572.18h-4.2ZM754.21 592.53h4.2V602.52h-4.2ZM773.29 601.45h4.2V613.59h-4.2ZM792.37 532.38h4.2V544.88h-4.2ZM811.45 559.69h4.2V582.36h-4.2Z" stroke="#0e2408" stroke-width="0.85" fill="#99f464"/>
<path d="M46.50 593.24h7.8V593.24h-7.8ZM65.58 622.51h7.8V623.22h-7.8ZM84.66 629.65h7.8V630.36h-7.8ZM103.74 550.41h7.8V551.30h-7.8ZM122.81 580.57h7.8V581.64h-7.8ZM141.89 587.71h7.8V590.74h-7.8ZM160.97 594.31h7.8V595.38h-7.8ZM180.05 546.66h7.8V564.51h-7.8ZM199.13 575.75h7.8V585.39h-7.8ZM218.21 597.53h7.8V603.24h-7.8ZM237.29 601.45h7.8V606.81h-7.8ZM256.37 538.63h7.8V543.09h-7.8ZM275.44 565.76h7.8V571.65h-7.8ZM294.52 583.60h7.8V592.17h-7.8ZM313.60 599.67h7.8V603.77h-7.8ZM332.68 532.92h7.8V536.85h-7.8ZM351.76 565.04h7.8V569.86h-7.8ZM370.84 592.17h7.8V597.53h-7.8ZM389.92 597.88h7.8V601.99h-7.8ZM409.00 532.92h7.8V536.49h-7.8ZM428.07 560.40h7.8V565.04h-7.8ZM447.15 589.49h7.8V596.10h-7.8ZM466.23 597.17h7.8V599.67h-7.8ZM485.31 531.85h7.8V536.85h-7.8ZM504.39 557.91h7.8V567.19h-7.8ZM523.47 593.96h7.8V599.67h-7.8ZM542.55 600.74h7.8V604.66h-7.8ZM561.63 533.63h7.8V540.06h-7.8ZM580.70 561.47h7.8V567.19h-7.8ZM599.78 597.53h7.8V600.74h-7.8ZM618.86 604.31h7.8V607.34h-7.8ZM637.94 536.49h7.8V541.84h-7.8ZM657.02 560.40h7.8V567.54h-7.8ZM676.10 595.74h7.8V600.20h-7.8ZM695.18 604.31h7.8V607.88h-7.8ZM714.26 533.63h7.8V541.84h-7.8ZM733.34 560.40h7.8V567.54h-7.8ZM752.41 593.96h7.8V599.31h-7.8ZM771.49 604.31h7.8V610.02h-7.8ZM790.57 534.71h7.8V540.77h-7.8ZM809.65 562.72h7.8V574.68h-7.8Z" stroke="#0e2408" stroke-width="0.85" fill="#99f464"/>
<path d="M46.50 593.24h7.8M65.58 622.87h7.8M84.66 630.01h7.8M103.74 550.77h7.8M122.81 581.11h7.8M141.89 589.49h7.8M160.97 594.85h7.8M180.05 550.23h7.8M199.13 580.57h7.8M218.21 600.74h7.8M237.29 604.66h7.8M256.37 540.42h7.8M275.44 568.97h7.8M294.52 589.49h7.8M313.60 601.45h7.8M332.68 534.71h7.8M351.76 567.19h7.8M370.84 594.85h7.8M389.92 599.67h7.8M409.00 534.71h7.8M428.07 562.72h7.8M447.15 593.06h7.8M466.23 598.42h7.8M485.31 533.63h7.8M504.39 562.72h7.8M523.47 597.53h7.8M542.55 602.52h7.8M561.63 536.49h7.8M580.70 565.04h7.8M599.78 599.31h7.8M618.86 605.56h7.8M637.94 538.63h7.8M657.02 564.51h7.8M676.10 597.88h7.8M695.18 606.09h7.8M714.26 536.85h7.8M733.34 565.76h7.8M752.41 596.63h7.8M771.49 607.34h7.8M790.57 536.85h7.8M809.65 569.86h7.8" stroke="#0e2408" stroke-width="0.85" fill="none"/>
<polyline points="50.40,593.24 69.48,622.87 88.56,630.01 107.64,551.12 126.72,581.11 145.79,588.96 164.87,594.85 183.95,551.12 203.03,578.79 222.11,601.09 241.19,601.45 260.27,544.88 279.34,569.86 298.42,591.81 317.50,600.74 336.58,534.17 355.66,565.04 374.74,588.24 393.82,596.10 412.90,535.42 431.97,561.83 451.05,590.03 470.13,597.53 489.21,534.17 508.29,563.62 527.37,609.66 546.45,605.56 565.53,545.77 584.60,567.19 603.68,599.67 622.76,605.02 641.84,543.09 660.92,566.83 680.00,600.20 699.08,607.34 718.16,546.66 737.24,572.54 756.31,595.38 775.39,605.56 794.47,546.66 813.55,581.11" stroke="#d42226" stroke-width="1.3" fill="none" stroke-linejoin="round"/>
<polyline points="50.40,593.24 69.48,622.87 88.56,630.01 107.64,551.12 126.72,581.11 145.79,588.96 164.87,594.85 183.95,555.59 203.03,580.57 222.11,601.09 241.19,603.77 260.27,541.84 279.34,567.19 298.42,588.60 317.50,600.74 336.58,534.71 355.66,566.83 374.74,595.38 393.82,599.31 412.90,535.06 431.97,563.26 451.05,593.06 470.13,597.88 489.21,535.06 508.29,561.83 527.37,597.53 546.45,601.99 565.53,540.06 584.60,563.62 603.68,599.67 622.76,604.66 641.84,539.52 660.92,564.51 680.00,598.42 699.08,604.66 718.16,538.63 737.24,566.29 756.31,596.63 775.39,606.81 794.47,538.99 813.55,569.86" stroke="#221ec8" stroke-width="1.3" fill="none" stroke-linejoin="round"/>
</g>
<rect x="41.05" y="521.3" width="782.45" height="115.40000000000009" fill="none" stroke="#000" stroke-width="1.15"/>
<path d="M50.40 636.7v4.86M126.72 636.7v4.86M203.03 636.7v4.86M279.34 636.7v4.86M355.66 636.7v4.86M431.97 636.7v4.86M508.29 636.7v4.86M584.60 636.7v4.86M660.92 636.7v4.86M737.24 636.7v4.86M813.55 636.7v4.86M41.05 596.5h-4.86M41.05 555.75h-4.86" stroke="#000" stroke-width="1.11" fill="none"/>
<text x="31.35" y="600.45" font-size="10.65" text-anchor="end">25</text>
<text x="31.35" y="559.70" font-size="10.65" text-anchor="end">30</text>
<text x="50.40" y="655.0" font-size="10.7" text-anchor="middle">12Z</text>
<text x="50.40" y="667.2" font-size="10.7" text-anchor="middle">09Feb</text>
<text x="126.72" y="655.0" font-size="10.7" text-anchor="middle">12Z</text>
<text x="126.72" y="667.2" font-size="10.7" text-anchor="middle">10Feb</text>
<text x="203.03" y="655.0" font-size="10.7" text-anchor="middle">12Z</text>
<text x="203.03" y="667.2" font-size="10.7" text-anchor="middle">11Feb</text>
<text x="279.34" y="655.0" font-size="10.7" text-anchor="middle">12Z</text>
<text x="279.34" y="667.2" font-size="10.7" text-anchor="middle">12Feb</text>
<text x="355.66" y="655.0" font-size="10.7" text-anchor="middle">12Z</text>
<text x="355.66" y="667.2" font-size="10.7" text-anchor="middle">13Feb</text>
<text x="431.97" y="655.0" font-size="10.7" text-anchor="middle">12Z</text>
<text x="431.97" y="667.2" font-size="10.7" text-anchor="middle">14Feb</text>
<text x="508.29" y="655.0" font-size="10.7" text-anchor="middle">12Z</text>
<text x="508.29" y="667.2" font-size="10.7" text-anchor="middle">15Feb</text>
<text x="584.60" y="655.0" font-size="10.7" text-anchor="middle">12Z</text>
<text x="584.60" y="667.2" font-size="10.7" text-anchor="middle">16Feb</text>
<text x="660.92" y="655.0" font-size="10.7" text-anchor="middle">12Z</text>
<text x="660.92" y="667.2" font-size="10.7" text-anchor="middle">17Feb</text>
<text x="737.24" y="655.0" font-size="10.7" text-anchor="middle">12Z</text>
<text x="737.24" y="667.2" font-size="10.7" text-anchor="middle">18Feb</text>
<text x="813.55" y="655.0" font-size="10.7" text-anchor="middle">12Z</text>
<text x="813.55" y="667.2" font-size="10.7" text-anchor="middle">19Feb</text>
</g>
</svg>
</body></html>
